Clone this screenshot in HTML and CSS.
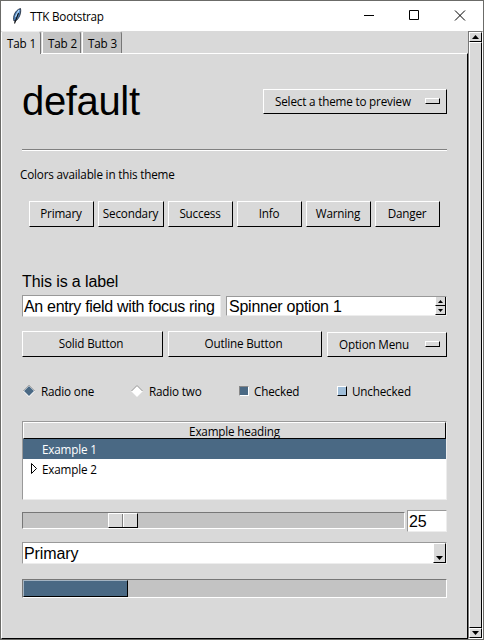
FILE: index.html
```html
<!DOCTYPE html>
<html lang="en">
<head>
<meta charset="utf-8">
<title>TTK Bootstrap</title>
<link rel="stylesheet" href="styles.css">
</head>
<body>
<div class="window">
  <header class="titlebar">
    <svg class="feather" width="12" height="18" viewBox="0 0 12 18"><path d="M3 14C1.500 10 4 3 9.500 1.500C10.500 6 8 12 4.500 14Z" fill="#4c82bd" stroke="#151d29" stroke-width=".8"/><path d="M8 3L4.500 10" stroke="#b5d9fa" stroke-width="1.400"/><path d="M7.500 6L3.500 16.500" stroke="#111" stroke-width="1.100"/></svg>
    <span class="title">TTK Bootstrap</span>
    <svg class="controls" width="120" height="30" viewBox="0 0 120 30" fill="none" stroke="#000"><path d="M8 14.500H18M53.500 9.500H62.500V18.500H53.500ZM99 9.500L109 19.500M109 9.500L99 19.500"/></svg>
  </header>
  <div class="body">
    <div class="notebook">
      <nav class="tabs"><div class="tab active">Tab 1</div><div class="tab">Tab 2</div><div class="tab">Tab 3</div></nav>
      <main class="panel">
        <div class="row head"><h1>default</h1><div class="menu theme raised"><span>Select a theme to preview</span><i class="raised"></i></div></div>
        <div class="rule"></div>
        <p class="caption">Colors available in this theme</p>
        <div class="row colors"><button>Primary</button><button class="wide">Secondary</button><button>Success</button><button>Info</button><button>Warning</button><button>Danger</button></div>
        <p class="label">This is a label</p>
        <div class="row fields"><div class="entry first">An entry field with focus ring</div><div class="entry spin"><span>Spinner option 1</span><div class="arrows"><b><svg width="5" height="3"><path d="M0 3L2.500 0L5 3Z"/></svg></b><b><svg width="5" height="3"><path d="M0 0L2.500 3L5 0Z"/></svg></b></div></div></div>
        <div class="row actions"><button class="solid">Solid Button</button><button class="outline">Outline Button</button><div class="menu option raised"><span>Option Menu</span><i class="raised"></i></div></div>
        <div class="row choices">
          <div class="choice one"><svg width="12" height="12"><path d="M0 6L6 0L12 6L6 12Z" fill="#fff"/><path d="M0 6L6 0L12 6" fill="none" stroke="#aaa"/><path d="M1 6L6 1L11 6L6 11Z" fill="#4a6984"/></svg>Radio one</div>
          <div class="choice two"><svg width="12" height="12"><path d="M0 6L6 0L12 6L6 12Z" fill="#fff"/><path d="M0.500 6L6 0.500L11.500 6" fill="none" stroke="#888"/></svg>Radio two</div>
          <div class="choice three"><i class="box on"></i>Checked</div>
          <div class="choice"><i class="box off"></i>Unchecked</div>
        </div>
        <div class="tree"><div class="heading raised">Example heading</div><div class="item selected">Example 1</div><div class="item"><svg width="7" height="11"><path d="M.5 .5V10.500L5.500 5.500Z" fill="none" stroke="#000"/></svg>Example 2</div></div>
        <div class="row scale"><div class="trough"><div class="thumb raised"><i></i></div></div><div class="entry value">25</div></div>
        <div class="entry combo"><span>Primary</span><div class="drop raised"><svg width="7" height="4"><path d="M0 0H7L3.500 4Z"/></svg></div></div>
        <div class="progress"><div class="bar" style="width:105px"></div></div>
      </main>
    </div>
    <div class="scrollbar"><div class="cap raised"><svg width="7" height="4"><path d="M0 4H7L3.500 0Z"/></svg></div><div class="slider raised"></div><div class="cap raised"><svg width="7" height="4"><path d="M0 0H7L3.500 4Z"/></svg></div></div>
  </div>
</div>
</body>
</html>
```
FILE: styles.css
```css
* { box-sizing: border-box; }
body { margin: 0; width: 484px; height: 640px; overflow: hidden; background: #6b6b68; color: #000; font: 11.7px/16px "Open Sans", "Noto Sans", sans-serif; letter-spacing: -0.18px; white-space: nowrap; }
h1, p { margin: 0; font-weight: normal; }
svg { display: block; flex: none; }
.window { padding: 1px 1px 1px 1px; height: 640px; display: flex; flex-direction: column; }
.titlebar { height: 30px; background: #fff; display: flex; align-items: center; padding: 0 7px 0 10px; }
.title { margin: -1px 0 0 7px; letter-spacing: -0.25px; }
.controls { margin-left: auto; }
.body { flex: 1; display: flex; background: #d9d9d9; }
.notebook { width: 467px; display: flex; flex-direction: column; }
.tabs { height: 22px; display: flex; gap: 1px; }
.tab { width: 40px; height: 22px; padding: 3px 0 0 5px; background: #c3c3c3; border: 1px solid #fff; border-right-color: #777; border-bottom: 0; border-top-color: #eee; border-radius: 2px 3px 0 0; }
.tab:nth-child(2) { width: 39px; }
.tab.active { height: 23px; background: #d9d9d9; position: relative; }
.panel { flex: 1; border: 1px solid #fff; border-right-color: #000; border-bottom-color: #000; padding: 27px 20px 0; }
.raised, button { border: 1px solid #fff; border-right-color: #000; border-bottom-color: #000; background: #d9d9d9; }
.row { display: flex; }
.head { height: 68px; justify-content: space-between; }
h1 { font: 40px/46px "Liberation Sans", Arial, sans-serif; letter-spacing: -0.35px; margin-top: -3px; }
.menu { height: 25px; display: flex; align-items: center; padding: 0 6px 0 11px; justify-content: space-between; }
.menu span { margin-top: -2px; }
.menu i { width: 15px; height: 6px; margin-top: -1px; }
.theme { width: 184px; margin-top: 8px; }
.rule { height: 2px; background: #fff; border-top: 1px solid #808080; }
.caption { margin: 15px 0 0 -2px; height: 16px; }
button { font: inherit; letter-spacing: inherit; color: inherit; padding: 0 1px 2px 0; height: 26px; width: 65px; border-radius: 0; }
.colors { margin: 19px 0 0 7px; gap: 4px; }
.wide { width: 66px; }
.label { font: 16px/20px "Liberation Sans", Arial, sans-serif; letter-spacing: -0.1px; margin-top: 45px; height: 20px; }
.fields { margin-top: 3px; height: 22px; gap: 5px; align-items: center; }
.entry { height: 22px; background: #fff; border: 1px solid #999; border-right-color: #ededed; border-bottom-color: #ededed; font: 16px/21px "Liberation Sans", Arial, sans-serif; letter-spacing: -0.1px; padding-left: 1px; }
.first { width: 199px; letter-spacing: -0.32px; }
.spin { width: 221px; height: 20px; line-height: 20px; letter-spacing: -0.25px; display: flex; justify-content: space-between; padding-left: 2px; }
.arrows { width: 11px; display: flex; flex-direction: column; border-right: 1px solid #000; }
.arrows b { flex: 1; background: #d9d9d9; border-bottom: 1px solid #000; border-left: 1px solid #fff; display: flex; align-items: center; justify-content: center; }
.actions { margin-top: 14px; height: 26px; gap: 5px; align-items: flex-end; }
.solid { width: 141px; padding-right: 3px; }
.outline { width: 154px; padding-right: 3px; }
.option { width: 120px; }
.choices { margin-top: 26px; height: 16px; }
.choice { display: flex; align-items: center; }
.choice svg { margin: 0 6px 0 1px; }
.one { width: 108px; }
.two { width: 109px; }
.three { width: 98px; }
.box { width: 10px; height: 10px; margin-right: 5px; border: 1px solid; }
.on { background: #4a6984; border-color: #888 #fff #fff #888; }
.off { background: #9fbdd8; border-color: #fff #000 #000 #fff; }
.tree { margin-top: 22px; height: 79px; background: #fff; border: 1px solid #999; border-right-color: #ededed; border-bottom-color: #ededed; }
.heading { height: 17px; line-height: 16px; text-align: center; }
.item { height: 20px; display: flex; align-items: center; padding: 0 0 1px 8px; }
.item svg { margin-right: 4px; }
.item.selected { background: #4a6984; color: #fff; padding-left: 19px; }
.scale { margin-top: 10px; height: 22px; gap: 2px; align-items: center; }
.trough { width: 383px; height: 17px; background: #c3c3c3; border: 1px solid #777; border-right-color: #fff; border-bottom-color: #fff; margin-bottom: 1px; }
.thumb { margin-left: 85px; width: 30px; height: 15px; }
.thumb i { display: block; width: 15px; height: 13px; border-right: 1px solid #fff; box-shadow: inset -1px 0 #808080; }
.value { width: 40px; }
.combo { margin-top: 10px; display: flex; justify-content: space-between; }
.drop { width: 13px; height: 20px; display: flex; align-items: flex-end; justify-content: center; padding-bottom: 2px; }
.progress { margin-top: 15px; height: 19px; background: #c3c3c3; border: 1px solid #777; border-right-color: #fff; border-bottom-color: #fff; }
.bar { height: 17px; background: #4a6984; border: 1px solid #a4b4c2; border-right-color: #000; border-bottom-color: #000; }
.scrollbar { width: 15px; display: flex; flex-direction: column; background: #c3c3c3; border: 1px solid #777; border-right-color: #fff; border-bottom-color: #fff; }
.cap { height: 10px; display: flex; align-items: center; justify-content: center; }
.slider { flex: 1; }
```
